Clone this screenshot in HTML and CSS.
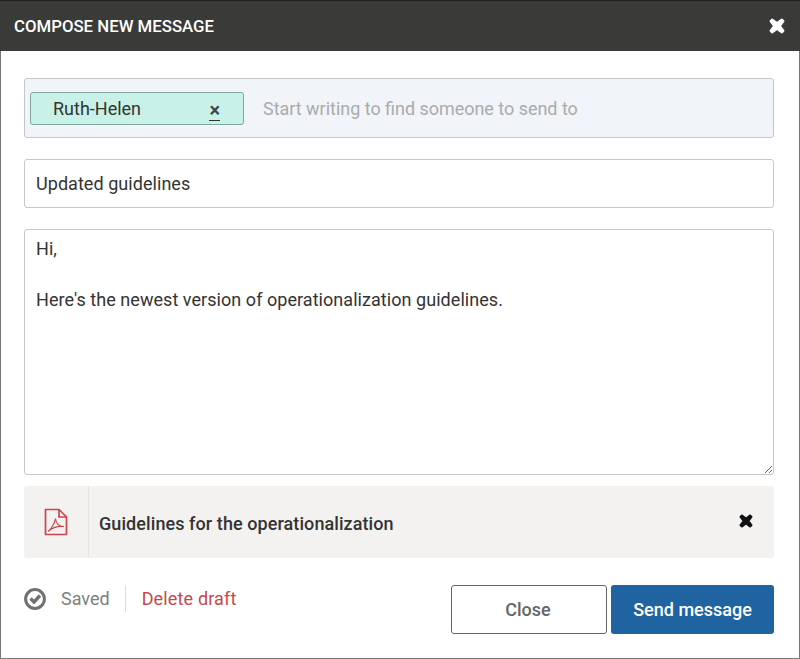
FILE: index.html
```html
<!DOCTYPE html>
<html lang="en">
<head>
    <meta charset="UTF-8" />
    <meta name="viewport" content="width=device-width, initial-scale=1.0" />
    <title>Compose new message</title>
    <link rel="stylesheet" href="styles.css">
</head>
<body>
    <div class="dialog">
        <header class="dialog-header">
            <h2>COMPOSE NEW MESSAGE</h2>
            <button class="icon-btn close-dialog">
                <svg width="16" height="16" viewBox="0 0 16 16"><path d="M3.200 1.500 8 5 12.800 1.500 14.500 3.200 11 8 14.500 12.800 12.800 14.500 8 11 3.200 14.500 1.500 12.800 5 8 1.500 3.200z" fill="currentColor" stroke="currentColor" stroke-width="2" stroke-linejoin="round"/></svg>
            </button>
        </header>

        <main class="dialog-body">
            <div class="recipients">
                <div class="tag">
                    <span>Ruth-Helen</span>
                    <span class="tag-remove">&times;</span>
                </div>
                <input class="recipient-input" type="text" placeholder="Start writing to find someone to send to">
            </div>

            <input class="field subject" type="text" value="Updated guidelines">

            <textarea class="field message">Hi,

Here's the newest version of operationalization guidelines.</textarea>

            <div class="attachment">
                <div class="attachment-icon">
                    <svg width="24" height="28" viewBox="0 0 24 28" fill="none" stroke="#c8474a" stroke-width="1.700">
                        <path d="M1.500 1.500H15L22.500 9V26.500H1.500Z" stroke-linejoin="round"/>
                        <path d="M15 1.500V9H22.500"/>
                        <path d="M4 23.500C7 21.500 10.500 16 11.500 10.500C12 16 14.500 18.500 20 18.500C15 18 9 19 4 23.500Z" stroke-width="1.100"/>
                    </svg>
                </div>
                <strong class="attachment-name">Guidelines for the operationalization</strong>
                <button class="icon-btn attachment-remove">
                    <svg width="14" height="14" viewBox="0 0 16 16"><path d="M3.200 1.500 8 5 12.800 1.500 14.500 3.200 11 8 14.500 12.800 12.800 14.500 8 11 3.200 14.500 1.500 12.800 5 8 1.500 3.200z" fill="currentColor" stroke="currentColor" stroke-width="2" stroke-linejoin="round"/></svg>
                </button>
            </div>

            <footer class="dialog-footer">
                <div class="draft-status">
                    <svg width="22" height="22" viewBox="0 0 22 22" fill="none" stroke="#717171">
                        <circle cx="11" cy="11" r="9.400" stroke-width="3"/>
                        <path d="M6.500 10.500 10 14 16 7.500" stroke-width="3.400"/>
                    </svg>
                    <span class="saved">Saved</span>
                    <a class="delete-draft" href="#">Delete draft</a>
                </div>
                <div class="actions">
                    <button class="btn btn-close">Close</button>
                    <button class="btn btn-send">Send message</button>
                </div>
            </footer>
        </main>
    </div>
</body>
</html>
```

FILE: styles.css
```css
* {
    margin: 0;
    padding: 0;
    box-sizing: border-box;
}

body {
    font-family: Roboto, "Liberation Sans", sans-serif;
    color: #333;
    background: #fff;
}

.dialog {
    width: 800px;
    height: 659px;
    border: 1px solid #777;
    border-top: none;
    display: flex;
    flex-direction: column;
}

.dialog-header {
    height: 51px;
    flex-shrink: 0;
    margin: 0 -1px;
    padding: 0 14px;
    display: flex;
    align-items: center;
    justify-content: space-between;
    background: #3a3b38;
    border-top: 1px solid #222;
    color: #fff;
}

.dialog-header h2 {
    font-size: 16.800px;
    font-weight: 500;
}

.icon-btn {
    display: flex;
    border: none;
    background: none;
    color: inherit;
    cursor: pointer;
}

.close-dialog {
    margin-right: 1px;
}

.dialog-body {
    flex: 1;
    padding: 27px 25px 24px 23px;
    display: flex;
    flex-direction: column;
}

.recipients {
    height: 60px;
    padding: 0 5px;
    display: flex;
    align-items: center;
    gap: 19px;
    background: #f1f4f8;
    border: 1px solid #c4c6c8;
    border-radius: 3px;
}

.tag {
    width: 214px;
    height: 33px;
    padding: 0 22px;
    display: flex;
    align-items: center;
    justify-content: space-between;
    background: #c8f2e8;
    border: 1px solid #7fa8a0;
    border-radius: 3px;
    font-size: 18px;
}

.tag-remove {
    height: 22px;
    margin-top: 4px;
    font-size: 20px;
    font-weight: 700;
    line-height: 22px;
    border-bottom: 1px solid #333;
    margin-right: 1px;
    color: #444;
}

.recipient-input {
    flex: 1;
    border: none;
    outline: none;
    background: transparent;
    font: inherit;
    font-size: 17.950px;
}

.recipient-input::placeholder {
    color: #a9abad;
    opacity: 1;
}

.field {
    display: block;
    width: 100%;
    border: 1px solid #c8c8c8;
    border-radius: 3px;
    outline: none;
    padding: 0 11px;
    font: inherit;
    font-size: 18px;
    color: #333;
}

.subject {
    height: 49px;
    margin-top: 21px;
    letter-spacing: 0.05px;
}

.message {
    height: 246px;
    margin-top: 21px;
    padding-top: 6px;
    line-height: 25.500px;
    letter-spacing: 0.05px;
    resize: vertical;
}

.attachment {
    height: 72px;
    margin-top: 11px;
    display: flex;
    align-items: center;
    background: #f3f2f1;
    border-radius: 3px;
}

.attachment-icon {
    width: 65px;
    height: 100%;
    display: flex;
    align-items: center;
    justify-content: center;
    border-right: 1px solid #e4e3e2;
}

.attachment-name {
    flex: 1;
    margin: 3px 0 0 10px;
    font-size: 18px;
    font-weight: 500;
    letter-spacing: 0.08px;
}

.attachment-remove {
    margin: 0 21px 3px 0;
    color: #111;
}

.dialog-footer {
    flex: 1;
    display: flex;
    justify-content: space-between;
    align-items: flex-end;
}

.draft-status {
    align-self: flex-start;
    margin-top: 27px;
    display: flex;
    align-items: center;
    font-size: 18px;
}

.saved {
    margin-left: 15px;
    padding-right: 15px;
    color: #808080;
    border-right: 1px solid #ddd;
    line-height: 27px;
}

.delete-draft {
    margin-left: 16px;
    color: #c8474a;
    text-decoration: none;
    letter-spacing: 0.15px;
}

.actions {
    display: flex;
    gap: 4px;
}

.btn {
    height: 49px;
    border-radius: 3px;
    font: inherit;
    font-size: 18px;
    font-weight: 500;
    cursor: pointer;
}

.btn-close {
    width: 156px;
    padding-right: 2px;
    background: #fff;
    border: 1px solid #666;
    color: #666;
}

.btn-send {
    width: 163px;
    background: #1f64a0;
    border: none;
    color: #fff;
}
```
